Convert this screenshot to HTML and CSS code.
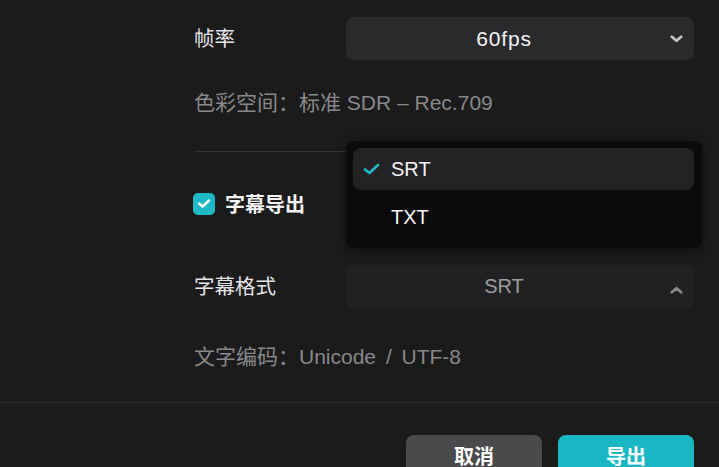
FILE: index.html
```html
<!DOCTYPE html>
<html lang="zh-CN">
<head>
<meta charset="utf-8">
<title>导出设置</title>
<link rel="stylesheet" href="styles.css">
</head>
<body>
<div class="dialog">
  <div class="form">
    <div class="row">
      <span class="label">帧率</span>
      <div class="select">
        <span class="value">60fps</span>
        <span class="chev">
          <svg width="13" height="8" viewBox="0 0 13 8"><polyline points="1.8,1.8 6.5,5.8 11.2,1.8" fill="none" stroke="#c4c4c6" stroke-width="2.8" stroke-linecap="round" stroke-linejoin="round"/></svg>
        </span>
      </div>
    </div>
    <p class="info">色彩空间：标准 SDR – Rec.709</p>
    <div class="divider"></div>
    <div class="row">
      <label class="check">
        <span class="box">
          <svg width="14" height="11" viewBox="0 0 14 11"><polyline points="2,5.5 5.5,8.5 12,2.5" fill="none" stroke="#fff" stroke-width="2.4" stroke-linecap="round" stroke-linejoin="round"/></svg>
        </span>
        <span class="check-text">字幕导出</span>
      </label>
    </div>
    <div class="row row-format">
      <span class="label">字幕格式</span>
      <div class="select select-open">
        <span class="value">SRT</span>
        <span class="chev chev-up">
          <svg width="13" height="8" viewBox="0 0 13 8"><polyline points="1.8,6.2 6.5,2.2 11.2,6.2" fill="none" stroke="#8a8a8c" stroke-width="2.8" stroke-linecap="round" stroke-linejoin="round"/></svg>
        </span>
      </div>
    </div>
    <p class="info info-enc">文字编码：Unicode / UTF-8</p>
  </div>
  <div class="footer">
    <button class="btn btn-cancel">取消</button>
    <button class="btn btn-primary">导出</button>
  </div>
  <ul class="menu">
    <li class="item item-active">
      <svg class="tick" width="17" height="12" viewBox="0 0 17 12"><polyline points="2,6.5 6.5,10 15,2" fill="none" stroke="#22b6c2" stroke-width="2.8" stroke-linecap="round" stroke-linejoin="round"/></svg>
      <span>SRT</span>
    </li>
    <li class="item"><span>TXT</span></li>
  </ul>
</div>
</body>
</html>
```

FILE: styles.css
```css
html, body {
  margin: 0;
  padding: 0;
  background: #1b1b1c;
}
body {
  font-family: "Liberation Sans", "Noto Sans CJK SC", sans-serif;
  font-size: 20px;
  color: #e4e4e6;
  width: 719px;
  height: 467px;
  overflow: hidden;
}
.dialog {
  position: relative;
  height: 467px;
}
.form {
  padding: 17px 25px 0 194px;
}
.row {
  display: flex;
  align-items: center;
  height: 43px;
}
.label {
  width: 152px;
  flex: none;
  line-height: 28px;
  font-size: 20.5px;
}
.select {
  flex: 1;
  height: 43px;
  display: flex;
  align-items: center;
  background: #2a2a2d;
  border-radius: 8px;
  padding-right: 4px;
  font-size: 21px;
  letter-spacing: 0.8px;
  color: #f4f4f5;
}
.select .value {
  flex: 1;
  text-align: center;
}
.chev {
  width: 28px;
  display: flex;
  justify-content: center;
  align-items: center;
  padding-top: 1px;
}
.chev-up {
  padding-top: 6px;
}
.select-open {
  background: #212123;
  color: #9c9c9e;
  font-size: 20px;
  letter-spacing: 0;
}
.info {
  margin: 29px 0 0;
  line-height: 28px;
  font-size: 21px;
  color: #88888a;
}
.divider {
  height: 1px;
  background: #333335;
  margin-top: 34px;
}
.divider + .row {
  margin-top: 30px;
}
.check {
  display: flex;
  align-items: center;
  gap: 10px;
  margin-left: -1px;
}
.box {
  width: 22px;
  height: 22px;
  border-radius: 5px;
  background: #1fb8c6;
  display: flex;
  align-items: center;
  justify-content: center;
}
.check-text {
  font-weight: bold;
  color: #f2f2f3;
}
.row-format {
  margin-top: 40px;
}
.info-enc {
  margin-top: 35px;
  word-spacing: 4px;
}
.footer {
  margin-top: 31px;
  border-top: 1px solid #2e2e30;
  padding: 32px 25px 0 0;
  display: flex;
  justify-content: flex-end;
  gap: 16px;
}
.btn {
  width: 136px;
  height: 42px;
  border: none;
  border-radius: 8px;
  font-family: inherit;
  font-size: 20px;
  font-weight: bold;
  color: #fff;
  padding: 0 0 2px;
}
.btn-cancel {
  background: #4a4a4d;
}
.btn-primary {
  background: #1ab8c5;
}
.menu {
  position: absolute;
  left: 346px;
  top: 141px;
  width: 356px;
  height: 107px;
  box-sizing: border-box;
  margin: 0;
  padding: 7px 8px 0 7px;
  list-style: none;
  background: #0b0b0d;
  border-radius: 8px;
  box-shadow: 0 2px 10px rgba(0, 0, 0, 0.5);
  display: flex;
  flex-direction: column;
  gap: 6px;
  font-size: 20px;
  color: #f4f4f5;
}
.item {
  height: 42px;
  border-radius: 8px;
  display: flex;
  align-items: center;
  padding-left: 38px;
  position: relative;
}
.item-active {
  background: #232326;
}
.tick {
  position: absolute;
  left: 10px;
  top: 15px;
}
```
